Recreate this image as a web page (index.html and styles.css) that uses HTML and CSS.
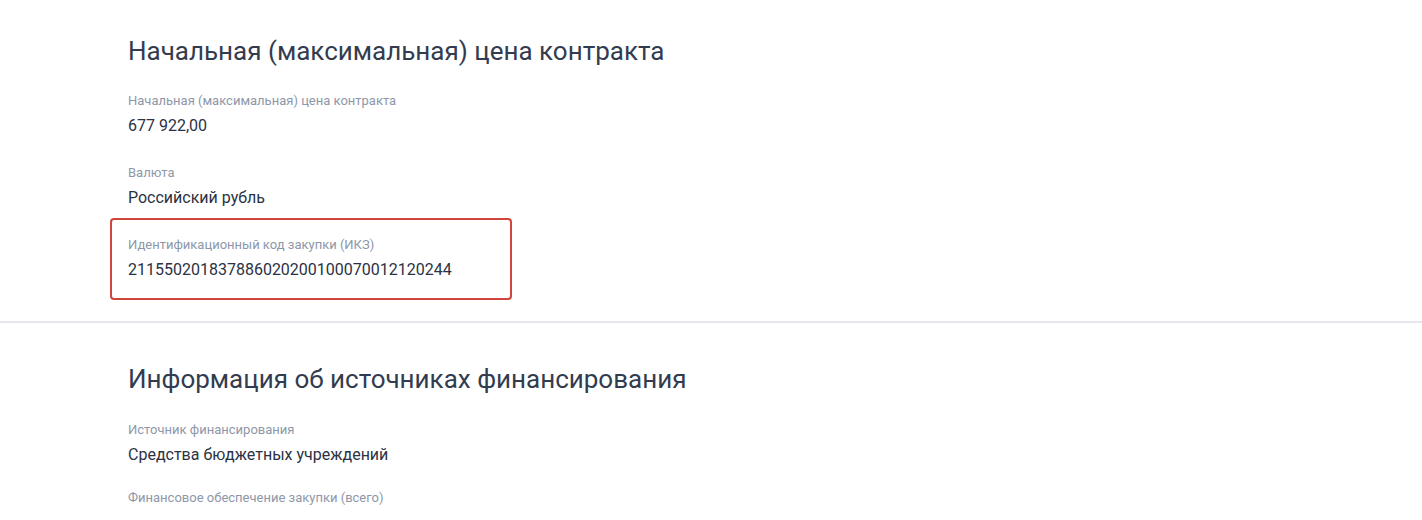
FILE: index.html
```html
<!DOCTYPE html>
<html lang="ru">
<head>
<meta charset="utf-8">
<title>Закупка</title>
<link rel="stylesheet" href="styles.css">
</head>
<body>
<div class="page">
  <section class="block">
    <h2 class="block-title">Начальная (максимальная) цена контракта</h2>
    <div class="field">
      <div class="field-label">Начальная (максимальная) цена контракта</div>
      <div class="field-value">677 922,00</div>
    </div>
    <div class="field">
      <div class="field-label">Валюта</div>
      <div class="field-value">Российский рубль</div>
    </div>
    <div class="field field-highlight">
      <div class="field-label">Идентификационный код закупки (ИКЗ)</div>
      <div class="field-value">211550201837886020200100070012120244</div>
    </div>
  </section>
  <section class="block block-finance">
    <h2 class="block-title">Информация об источниках финансирования</h2>
    <div class="field">
      <div class="field-label">Источник финансирования</div>
      <div class="field-value">Средства бюджетных учреждений</div>
    </div>
    <div class="field">
      <div class="field-label">Финансовое обеспечение закупки (всего)</div>
    </div>
  </section>
</div>
</body>
</html>
```

FILE: styles.css
```css
html, body {
  margin: 0;
  padding: 0;
  background: #ffffff;
}
body {
  font-family: Roboto, "Noto Sans", sans-serif;
  color: #2b3244;
}
.page {
  display: flex;
  flex-direction: column;
}
.block {
  padding: 35px 128px 12px;
  border-bottom: 2px solid #e5e7ec;
}
.block-finance {
  padding-top: 40px;
  border-bottom: none;
}
.block-title {
  margin: 0 0 26px;
  font-size: 26px;
  line-height: 32px;
  font-weight: 400;
  color: #333c4f;
}
.block-finance .block-title {
  margin-bottom: 27px;
}
.field {
  display: flex;
  flex-direction: column;
  gap: 5px;
  margin-bottom: 27px;
}
.block-finance .field {
  margin-bottom: 23px;
}
.field-label {
  font-size: 13px;
  line-height: 16px;
  color: #8e97a9;
}
.field-value {
  font-size: 16px;
  line-height: 24px;
  color: #2b3244;
}
.field-highlight {
  box-sizing: border-box;
  width: 402px;
  margin-left: -18px;
  margin-top: -19px;
  margin-bottom: 9px;
  padding: 17px 16px 16px;
  border: 2px solid #cf4539;
  border-radius: 4px;
}
```
